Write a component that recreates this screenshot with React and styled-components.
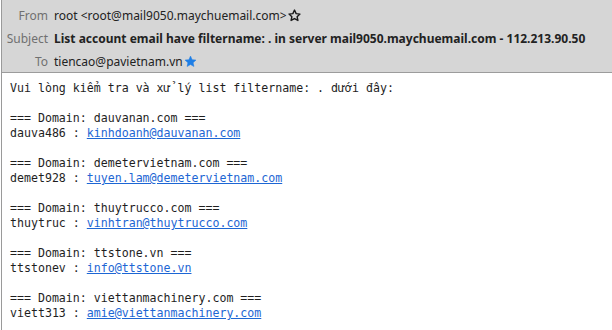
import styled, { createGlobalStyle } from 'styled-components';

const Global = createGlobalStyle`
    html, body {
        margin: 0;
        padding: 0;
        background: #ffffff;
    }
`

const Window = styled.div`
    width: 612px;
    height: 330px;
    overflow: hidden;
    box-sizing: border-box;
    border-left: 1px solid #9a9a9a;
    margin-left: 1px;
    background: #fff;
`

const Header = styled.div`
    background: #d6d6d6;
    border-bottom: 1px solid #9c9c9c;
    padding: 5px 0 0;
    height: 73px;
    box-sizing: border-box;
    display: flex;
    flex-direction: column;
    gap: 1px;
    font-family: "Noto Sans", "Open Sans", sans-serif;
    font-size: 12px;
`

const Row = styled.div`
    display: grid;
    grid-template-columns: 46px 1fr;
    column-gap: 6px;
    height: 22px;
    align-items: center;
`

const Label = styled.span`
    text-align: right;
    color: #707070;
`

const Value = styled.span`
    display: flex;
    align-items: center;
    gap: 1px;
    color: #222;
    font-weight: ${p => (p.$bold ? 700 : 400)};
    white-space: nowrap;
`

const Body = styled.div`
    padding: 8px 0 0 8px;
    font-family: "DejaVu Sans Mono", monospace;
    font-size: 11.6px;
    line-height: 15px;
    color: #1e1e1e;
    white-space: pre;
`

const Line = styled.div`
    height: 15px;
`

const Link = styled.a`
    color: #1d66d4;
    text-decoration: underline;
`

const Star = ({ filled }) => (
    <svg width="13" height="13" viewBox="0 0 24 24">
        <path
            d="M12 2l3 6.6 7.1.8-5.3 4.8 1.5 7L12 17.6l-6.3 3.6 1.5-7L1.9 9.4 9 8.6z"
            fill={filled ? '#1f7fe6' : 'none'}
            stroke={filled ? '#1f7fe6' : '#1a1a1a'}
            strokeWidth={filled ? 1 : 2.6}
            strokeLinejoin="round"
        />
    </svg>
)

const domains = [
    ['dauvanan.com', 'dauva486', 'kinhdoanh@dauvanan.com'],
    ['demetervietnam.com', 'demet928', 'tuyen.lam@demetervietnam.com'],
    ['thuytrucco.com', 'thuytruc', 'vinhtran@thuytrucco.com'],
    ['ttstone.vn', 'ttstonev', 'info@ttstone.vn'],
    ['viettanmachinery.com', 'viett313', 'amie@viettanmachinery.com'],
]

const intro = 'Vui l\u00F2ng ki\u1EC3m tra v\u00E0 x\u1EED l\u00FD list filtername: . d\u01B0\u1EDBi \u0111\u00E2y:'

const App = () => {
    return (
        <Window>
            <Global />
            <Header>
                <Row>
                    <Label>From</Label>
                    <Value>root &lt;root@mail9050.maychuemail.com&gt; <Star /></Value>
                </Row>
                <Row>
                    <Label>Subject</Label>
                    <Value $bold>List account email have filtername: . in server mail9050.maychuemail.com - 112.213.90.50</Value>
                </Row>
                <Row>
                    <Label>To</Label>
                    <Value>tiencao@pavietnam.vn<Star filled /></Value>
                </Row>
            </Header>
            <Body>
                <Line>{intro}</Line>
                {domains.map(([d, u, m]) => (
                    <div key={d}>
                        <Line />
                        <Line>{`=== Domain: ${d} ===`}</Line>
                        <Line>
                            {`${u} : `}
                            <Link href={`mailto:${m}`}>{m}</Link>
                        </Line>
                    </div>
                ))}
            </Body>
        </Window>
    );
}

export default App;
